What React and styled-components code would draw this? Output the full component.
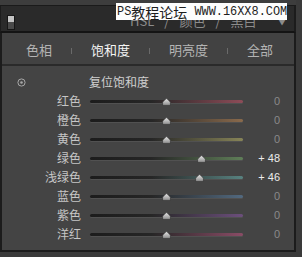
import React from "react";
import styled, { createGlobalStyle } from "styled-components";

const Global = createGlobalStyle`
  html, body { margin: 0; padding: 0; background: #3a3a3a; }
  body { font-family: "Noto Sans CJK SC", "Noto Sans", sans-serif; }
`;

const Page = styled.div`
  position: relative;
  width: 302px;
  height: 257px;
  background: #3a3a3a;
  overflow: hidden;
`;

const Frame = styled.div`
  width: 296px;
  display: flex;
  flex-direction: column;
`;

const TopStrip = styled.div`
  height: 5px;
  background: #3d3d3d;
  border-bottom: 1px solid #1a1a1a;
`;

const Header = styled.div`
  height: 25px;
  background: #2a2a2a;
  border-bottom: 2px solid #141414;
  border-left: 1px solid #1c1c1c;
  border-right: 2px solid #1c1c1c;
  display: flex;
  align-items: center;
  padding-left: 6px;
  box-sizing: content-box;
`;

const Toggle = styled.div`
  width: 6px;
  height: 13px;
  margin-top: 8px;
  border: 1px solid #161616;
  background: linear-gradient(#c4c4c4 0 50%, #4a4a4a 50% 100%);
`;

const HiddenTitle = styled.div`
  margin-left: 115px;
  margin-top: 4px;
  display: flex;
  gap: 10px;
  font-size: 13px;
  color: #8c8c8c;
  white-space: nowrap;
`;

const Caret = styled.div`
  margin-left: auto;
  margin-right: 8px;
  margin-top: 6px;
  font-size: 8px;
  color: #8c8c8c;
`;

const Watermark = styled.div`
  position: absolute;
  left: 116px;
  top: 3px;
  width: 171px;
  height: 17px;
  background: #fdfdfd;
  color: #1e1e1e;
  display: flex;
  align-items: center;
  white-space: nowrap;
  padding-left: 1px;
  box-sizing: border-box;
`;

const WmLatin = styled.span`
  font-family: "Liberation Mono", monospace;
  font-size: 11.9px;
  white-space: pre;
`;

const WmCjk = styled.span`
  font-family: "Noto Sans CJK SC", sans-serif;
  font-size: 14px;
  line-height: 1;
`;

const Body = styled.div`
  border-left: 2px solid #1c1c1c;
  border-right: 2px solid #1c1c1c;
  border-bottom: 2px solid #1c1c1c;
`;

const Tabs = styled.div`
  background: #424242;
  border-bottom: 2px solid #2a2a2a;
  display: flex;
  align-items: center;
  gap: 19px;
  padding-left: 24px;
  padding-top: 2px;
  box-sizing: border-box;
  height: 33px;
`;

const Tab = styled.div`
  font-size: 13px;
  line-height: 16px;
  color: ${(p) => (p.$active ? "#f4f4f4" : "#b4b4b4")};
`;

const Sep = styled.div`
  width: 1px;
  height: 6px;
  margin-top: 2px;
  background: #6a6a6a;
`;

const Panel = styled.div`
  background: #444444;
  padding: 7px 0 7px 0;
  display: flex;
  flex-direction: column;
`;

const ResetRow = styled.div`
  height: 18px;
  display: flex;
  align-items: center;
`;

const Target = styled.svg`
  margin-left: 15px;
  width: 9px;
  height: 9px;
`;

const ResetLabel = styled.div`
  margin-left: 63px;
  font-size: 12px;
  color: #cfcfcf;
  line-height: 14px;
`;

const Row = styled.div`
  height: 19px;
  display: grid;
  grid-template-columns: 88px 153px 37px;
  align-items: center;
`;

const Label = styled.div`
  text-align: right;
  padding-right: 9px;
  font-size: 12px;
  line-height: 14px;
  color: #c6c6c6;
`;

const TrackWrap = styled.div`
  position: relative;
  height: 19px;
  display: flex;
  align-items: center;
  padding-top: 2px;
  box-sizing: border-box;
`;

const Track = styled.div`
  width: 100%;
  height: 3px;
  border-radius: 2px;
  background: linear-gradient(90deg, #1c1c1c 0%, #262626 40%, ${(p) => p.$color} 100%);
  box-shadow: 0 1px 0 rgba(255, 255, 255, 0.07);
`;

const Thumb = styled.svg`
  position: absolute;
  top: 7px;
  width: 9px;
  height: 8px;
  margin-left: -4.5px;
`;

const Value = styled.div`
  text-align: right;
  font-family: "Liberation Sans", Arial, sans-serif;
  font-size: 11px;
  color: ${(p) => (p.$zero ? "#8a8a8a" : "#ececec")};
  white-space: pre;
`;

const hues = [
  { name: "红色", v: 0, c: "#8e4c58" },
  { name: "橙色", v: 0, c: "#8a6a4c" },
  { name: "黄色", v: 0, c: "#878458" },
  { name: "绿色", v: 48, c: "#5f7e58" },
  { name: "浅绿色", v: 46, c: "#588280" },
  { name: "蓝色", v: 0, c: "#52697f" },
  { name: "紫色", v: 0, c: "#6c4f7c" },
  { name: "洋红", v: 0, c: "#8a4c66" },
];

function SliderRow({ name, v, c }) {
  const frac = 0.5 + v / 200;
  const left = 4.5 + (153 - 9) * frac;
  return (
    <Row>
      <Label>{name}</Label>
      <TrackWrap>
        <Track $color={c} />
        <Thumb viewBox="0 0 9 8" style={{ left: `${left}px` }}>
          <defs>
            <linearGradient id={`g${name}`} x1="0" y1="0" x2="0" y2="1">
              <stop offset="0" stopColor="#e6e6e6" />
              <stop offset="1" stopColor="#8c8c8c" />
            </linearGradient>
          </defs>
          <path
            d="M0.6 7.4 L0.6 4.6 Q0.6 4 1.1 3.5 L4 0.8 Q4.5 0.4 5 0.8 L7.9 3.5 Q8.4 4 8.4 4.6 L8.4 7.4 Z"
            fill={`url(#g${name})`}
            stroke="#2a2a2a"
            strokeWidth="0.6"
          />
        </Thumb>
      </TrackWrap>
      <Value $zero={v === 0}>{v === 0 ? "0" : `+ ${v}`}</Value>
    </Row>
  );
}

export default function App() {
  return (
    <Page>
      <Global />
      <Frame>
        <TopStrip />
        <Header>
          <Toggle />
          <HiddenTitle>
            <span>HSL</span>
            <span>/</span>
            <span>颜色</span>
            <span>/</span>
            <span>黑白</span>
          </HiddenTitle>
          <Caret>▼</Caret>
        </Header>
        <Body>
          <Tabs>
            <Tab>色相</Tab>
            <Sep />
            <Tab $active>饱和度</Tab>
            <Sep />
            <Tab>明亮度</Tab>
            <Sep />
            <Tab>全部</Tab>
          </Tabs>
          <Panel>
            <ResetRow>
              <Target viewBox="0 0 9 9">
                <circle cx="4.5" cy="4.5" r="3.6" fill="none" stroke="#a8a8a8" strokeWidth="1" />
                <circle cx="4.5" cy="4.5" r="1.3" fill="#a8a8a8" />
              </Target>
              <ResetLabel>复位饱和度</ResetLabel>
            </ResetRow>
            {hues.map((h) => (
              <SliderRow key={h.name} {...h} />
            ))}
          </Panel>
        </Body>
      </Frame>
      <Watermark>
        <WmLatin>PS</WmLatin>
        <WmCjk>教程论坛</WmCjk>
        <WmLatin> WWW.16XX8.COM</WmLatin>
      </Watermark>
    </Page>
  );
}
